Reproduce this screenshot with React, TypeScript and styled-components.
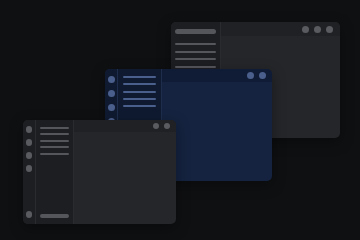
import React from "react";
import styled, { createGlobalStyle } from "styled-components";

const Global = createGlobalStyle`
  html, body { margin: 0; padding: 0; background: #0f1012; }
  body { width: 360px; height: 240px; overflow: hidden; font-family: "Inter", sans-serif; }
`;

type Tone = "gray" | "blue";

const palette = {
  gray: {
    body: "#252629",
    side: "#1d1e21",
    title: "#202124",
    border: "#2a2b2f",
    dot: "#5a5b61",
    line: "#55565c",
  },
  blue: {
    body: "#152340",
    side: "#0f1a31",
    title: "#101c35",
    border: "#1e2d4c",
    dot: "#4b5f8c",
    line: "#4a5f8b",
  },
};

const Desktop = styled.div`
  position: relative;
  width: 360px;
  height: 240px;
  background: #0f1012;
  overflow: hidden;
`;

const Frame = styled.div<{ $tone: Tone; $x: number; $y: number; $w: number; $h: number }>`
  position: absolute;
  left: ${(p) => p.$x}px;
  top: ${(p) => p.$y}px;
  width: ${(p) => p.$w}px;
  height: ${(p) => p.$h}px;
  display: flex;
  border-radius: 5px;
  overflow: hidden;
  background: ${(p) => palette[p.$tone].body};
  box-shadow: 0 4px 14px rgba(0, 0, 0, 0.35);
`;

const Rail = styled.div<{ $tone: Tone; $w: number; $pt: number; $gap: number; $pb: number }>`
  width: ${(p) => p.$w}px;
  flex: none;
  box-sizing: border-box;
  display: flex;
  flex-direction: column;
  align-items: center;
  gap: ${(p) => p.$gap}px;
  padding-top: ${(p) => p.$pt}px;
  padding-bottom: ${(p) => p.$pb}px;
  background: ${(p) => palette[p.$tone].side};
  border-right: 1px solid ${(p) => palette[p.$tone].border};
`;

const RailSpacer = styled.div`
  flex: 1;
`;

const Dot = styled.span<{ $tone: Tone; $d: number }>`
  width: ${(p) => p.$d}px;
  height: ${(p) => p.$d}px;
  flex: none;
  border-radius: 50%;
  background: ${(p) => palette[p.$tone].dot};
`;

const Sidebar = styled.div<{ $tone: Tone; $w: number; $pt: number; $pl: number; $pr: number; $pb: number }>`
  width: ${(p) => p.$w}px;
  flex: none;
  box-sizing: border-box;
  display: flex;
  flex-direction: column;
  padding: ${(p) => `${p.$pt}px ${p.$pr}px ${p.$pb}px ${p.$pl}px`};
  background: ${(p) => palette[p.$tone].side};
  border-right: 1px solid ${(p) => palette[p.$tone].border};
`;

const LineList = styled.div<{ $gap: number }>`
  display: flex;
  flex-direction: column;
  gap: ${(p) => p.$gap}px;
`;

const Line = styled.span<{ $tone: Tone }>`
  height: 2px;
  border-radius: 1px;
  background: ${(p) => palette[p.$tone].line};
`;

const Pill = styled.span<{ $tone: Tone; $h: number; $mb: number }>`
  height: ${(p) => p.$h}px;
  margin-bottom: ${(p) => p.$mb}px;
  border-radius: ${(p) => p.$h / 2}px;
  background: ${(p) => palette[p.$tone].line};
`;

const Spacer = styled.div`
  flex: 1;
`;

const Main = styled.div`
  flex: 1;
  display: flex;
  flex-direction: column;
`;

const TitleBar = styled.div<{ $tone: Tone; $h: number; $pr: number; $gap: number }>`
  height: ${(p) => p.$h}px;
  flex: none;
  display: flex;
  align-items: center;
  justify-content: flex-end;
  gap: ${(p) => p.$gap}px;
  padding-right: ${(p) => p.$pr}px;
  background: ${(p) => palette[p.$tone].title};
`;

const Body = styled.div`
  flex: 1;
`;

export default function App() {
  return (
    <>
      <Global />
      <Desktop>
        {/* back window */}
        <Frame $tone="gray" $x={171} $y={22} $w={169} $h={116}>
          <Sidebar $tone="gray" $w={50} $pt={7} $pl={4} $pr={4} $pb={0}>
            <Pill $tone="gray" $h={5} $mb={9} />
            <LineList $gap={5.5}>
              <Line $tone="gray" />
              <Line $tone="gray" />
              <Line $tone="gray" />
              <Line $tone="gray" />
              <Line $tone="gray" />
              <Line $tone="gray" />
            </LineList>
          </Sidebar>
          <Main>
            <TitleBar $tone="gray" $h={14} $pr={7} $gap={5}>
              <Dot $tone="gray" $d={7} />
              <Dot $tone="gray" $d={7} />
              <Dot $tone="gray" $d={7} />
            </TitleBar>
            <Body />
          </Main>
        </Frame>

        {/* blue window */}
        <Frame $tone="blue" $x={105} $y={69} $w={167} $h={112}>
          <Rail $tone="blue" $w={13} $pt={6.5} $gap={7} $pb={6}>
            <Dot $tone="blue" $d={7} />
            <Dot $tone="blue" $d={7} />
            <Dot $tone="blue" $d={7} />
            <Dot $tone="blue" $d={7} />
            <RailSpacer />
            <Dot $tone="blue" $d={7} />
          </Rail>
          <Sidebar $tone="blue" $w={44} $pt={7} $pl={5} $pr={5} $pb={0}>
            <LineList $gap={5.25}>
              <Line $tone="blue" />
              <Line $tone="blue" />
              <Line $tone="blue" />
              <Line $tone="blue" />
              <Line $tone="blue" />
            </LineList>
          </Sidebar>
          <Main>
            <TitleBar $tone="blue" $h={13} $pr={6.5} $gap={5}>
              <Dot $tone="blue" $d={7} />
              <Dot $tone="blue" $d={7} />
            </TitleBar>
            <Body />
          </Main>
        </Frame>

        {/* front window */}
        <Frame $tone="gray" $x={23} $y={120} $w={153} $h={104}>
          <Rail $tone="gray" $w={13} $pt={6} $gap={6.5} $pb={6.5}>
            <Dot $tone="gray" $d={6.5} />
            <Dot $tone="gray" $d={6.5} />
            <Dot $tone="gray" $d={6.5} />
            <Dot $tone="gray" $d={6.5} />
            <RailSpacer />
            <Dot $tone="gray" $d={6.5} />
          </Rail>
          <Sidebar $tone="gray" $w={38} $pt={6.5} $pl={4} $pr={4} $pb={6}>
            <LineList $gap={4.67}>
              <Line $tone="gray" />
              <Line $tone="gray" />
              <Line $tone="gray" />
              <Line $tone="gray" />
              <Line $tone="gray" />
            </LineList>
            <Spacer />
            <Pill $tone="gray" $h={4} $mb={0} />
          </Sidebar>
          <Main>
            <TitleBar $tone="gray" $h={12} $pr={6} $gap={4.5}>
              <Dot $tone="gray" $d={6.5} />
              <Dot $tone="gray" $d={6.5} />
            </TitleBar>
            <Body />
          </Main>
        </Frame>
      </Desktop>
    </>
  );
}
